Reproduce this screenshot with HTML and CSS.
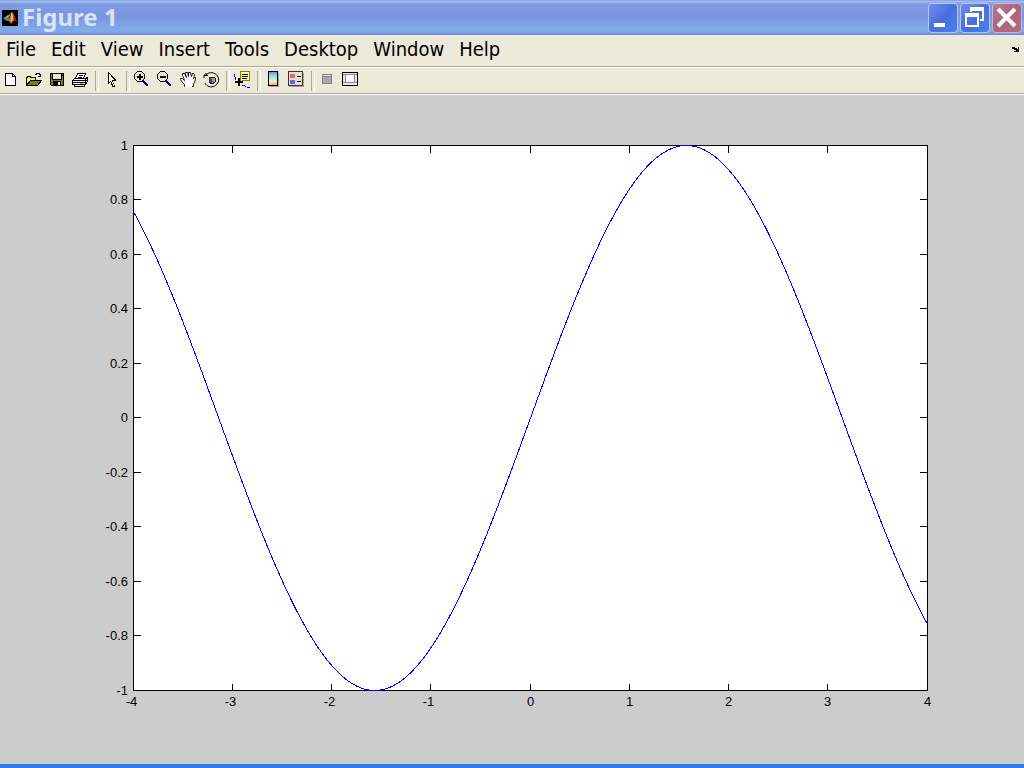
FILE: index.html
```html
<!DOCTYPE html>
<html lang="en">
<head>
<meta charset="utf-8">
<title>Figure 1</title>
<link rel="stylesheet" href="styles.css">
</head>
<body>
<div class="window">
  <header class="titlebar">
    <svg class="logo" viewBox="0 0 16 16" aria-hidden="true"><path fill="#000" d="M0 0h16v16H0z"/><path fill="#3f8fa0" d="M1 8l4-2 2 2-2 3-2-1z"/><path fill="#65c8cf" d="M4 6l3-1 3-3-3 5-2 1z"/><path fill="#e8641a" d="M5 11l3-4 2-5 2 3 3 7-3-2-3 4-2-3z"/><path fill="#ffc45a" d="M9 4l1-2 1 5-1 5-1-1z"/><path fill="#8c2010" d="M11 4l4 8-3-2z"/></svg>
    <h1 class="title">Figure 1</h1>
    <div class="controls">
      <button class="control" aria-label="Minimize"><svg viewBox="0 0 28 28"><path fill="#fff" d="M5 19h11v4H5z"/></svg></button>
      <button class="control" aria-label="Restore"><svg viewBox="0 0 28 28"><path fill="#fff" fill-rule="evenodd" d="M9 3h14v14h-4v-2h2V7H11v1H9zM4 9h14v14H4zM6 13v8h10v-8z"/></svg></button>
      <button class="control close" aria-label="Close"><svg viewBox="0 0 28 28"><path d="M5 5l17 17M22 5L5 22" stroke="#fff" stroke-width="4"/></svg></button>
    </div>
  </header>
  <nav class="menubar">
    <button class="menu">File</button><button class="menu">Edit</button><button class="menu">View</button><button class="menu">Insert</button><button class="menu">Tools</button><button class="menu">Desktop</button><button class="menu">Window</button><button class="menu">Help</button>
    <button class="dock" aria-label="Dock figure"><svg viewBox="0 0 8 8"><path d="M0 1h3v1h2v1h1V1h1v5H2V5h2V4H2V3H0z"/></svg></button>
  </nav>
  <div class="toolbar" role="toolbar" aria-label="Figure tools">
    <button class="tool" aria-label="New figure"><svg viewBox="0 0 17 17"><path d="M3.500 1.500h7l3 3v9h-10z" fill="#fff" stroke="#000"/><path d="M10.500 1.500v3h3" fill="none" stroke="#000"/></svg></button>
    <button class="tool" aria-label="Open file"><svg viewBox="0 0 17 17"><path d="M1 4h4v1h6v3H6l-4 5H1z" fill="#f8f060"/><path d="M1.500 13V5.500h1v-1h3v1h5v3M10 2.500h1v-1h3v1h1v2M13 4.500h3M15.500 2v3" fill="none" stroke="#000"/><path d="M5.500 8.500h11l-4 5h-11z" fill="#808000" stroke="#000"/></svg></button>
    <button class="tool" aria-label="Save figure"><svg viewBox="0 0 17 17"><path d="M2.500 1.500h13v12h-12l-1-1z" fill="#808000" stroke="#000"/><path d="M5 2h8v5H5z" fill="#ece9d8"/><path d="M4.500 2v5.500h9V2M14 3h1" fill="none" stroke="#000"/><path d="M5 9h8v5H5z"/><path d="M10 10h2v3h-2z" fill="#ece9d8"/></svg></button>
    <button class="tool" aria-label="Print figure"><svg viewBox="0 0 17 17"><path d="M6.500 1.500h8l-2 5h-8z" fill="#fff" stroke="#000"/><path d="M8 3.500h4M7 5.500h4" stroke="#000"/><path d="M3.500 6.500h11l2-1v4l-2 3h-13v-4z" fill="#fff" stroke="#000"/><path d="M1 8.500h13M2 10.500h12M3.500 12v2h10v-2M14.500 7v5M15 8.500h2" fill="none" stroke="#000"/><path d="M9 11.500h3" stroke="#c8b400"/></svg></button>
    <span class="separator"></span>
    <button class="tool" aria-label="Edit plot"><svg viewBox="0 0 17 17"><path d="M6 0h1v1h1v1h1v1h1v1h1v1h1v1h1v1h1v2h-3v2h1v2h1v2h-3v-2h-1v-2H9v-1H8v1H7v1H6z"/><path d="M7 2v8h1V9h1v1h1v2h1v2h1v-2h-1v-2h-1V8h2V7h-1V6h-1V5h-1V4H9V3H8V2z" fill="#fff"/></svg></button>
    <span class="separator"></span>
    <button class="tool" aria-label="Zoom in"><svg viewBox="0 0 17 17"><path d="M10 9l5 5" stroke="#000080" stroke-width="2.500"/><path d="M4.500-.500h4l3 3v4l-3 3h-4l-3-3v-4z" fill="#ece9d8" stroke="#000"/><path d="M4 4h2V2h2v2h2v2H8v2H6V6H4z"/></svg></button>
    <button class="tool" aria-label="Zoom out"><svg viewBox="0 0 17 17"><path d="M10 9l5 5" stroke="#000080" stroke-width="2.500"/><path d="M4.500-.500h4l3 3v4l-3 3h-4l-3-3v-4z" fill="#ece9d8" stroke="#000"/><path d="M4 4h6v2H4z"/></svg></button>
    <button class="tool" aria-label="Pan"><svg viewBox="0 0 17 17"><g class="smooth"><path d="M5.500 14.500v-2l-2-2-2-3V6.500h2l2 2-1-3-1-2v-2h2l2 4-1-3V.5h2l1 4V.5h2l1 4 1-3h1l1 1-1 4 1-1h1v2l-2 5v2z" fill="#fff" stroke="#000" stroke-width=".9"/><path d="M6 13h7v2H6z" fill="#fff"/></g></svg></button>
    <button class="tool" aria-label="Rotate 3D"><svg viewBox="0 0 17 17"><g class="smooth"><path d="M4 3C7-.500 13 0 15.500 4s.500 8-3 10-8 .500-9.500-3" fill="none" stroke="#000"/><path d="M2 3.500h4M4.500 1L2 3.500V6" fill="none" stroke="#000"/></g><path d="M7 6l3-1 3 1v4l-3 2-3-2z" fill="#999" stroke="#222"/><path d="M7 6l3 1v4l-3-1z" fill="#444"/></svg></button>
    <span class="separator"></span>
    <button class="tool" aria-label="Data cursor"><svg viewBox="0 0 17 17"><path d="M1.500 2v3M2.500 5v3M9 13.500h3M12 14.500h1M14 15.500h3" stroke="#00f"/><path d="M7.500-.500h9v9h-7l-2 2z" fill="#ffff9c" stroke="#808000"/><path d="M9 2.500h6M9 4.500h6M9 6.500h5" stroke="#000"/><path d="M2 9h3V6h2v3h3v2H7v3H5v-3H2z"/></svg></button>
    <span class="separator"></span>
    <button class="tool" aria-label="Insert colorbar"><svg viewBox="0 0 17 17"><defs><linearGradient id="spectrum" x1="0" y1="0" x2="0" y2="1"><stop offset="0" stop-color="#777df0"/><stop offset=".35" stop-color="#8de8f4"/><stop offset=".7" stop-color="#fff2a0"/><stop offset="1" stop-color="#f49898"/></linearGradient></defs><path d="M5 1h10v14H5z" fill="#aaa79c"/><path d="M4.500-.500h9v14h-9z" fill="url(#spectrum)" stroke="#000"/></svg></button>
    <button class="tool" aria-label="Insert legend"><svg viewBox="0 0 17 17"><path d="M2 1h15v14H2z" fill="#aaa79c"/><path d="M1.500-.500h14v14h-14z" fill="#e4dfd4" stroke="#333"/><path d="M3 2h5v4H3z" fill="#e86464"/><path d="M3 8h5v4H3z" fill="#6464e8"/><path d="M10 4.500h4M10 9.500h4" stroke="#000"/></svg></button>
    <span class="separator"></span>
    <button class="tool" aria-label="Hide plot tools"><svg viewBox="0 0 17 17"><path d="M4.500 2.500h9v9h-9z" fill="#a9a9a9" stroke="#858585"/><path d="M5 3.500h8" stroke="#ddd"/><path d="M5 4.500h8" stroke="#858585"/></svg></button>
    <button class="tool" aria-label="Show plot tools"><svg viewBox="0 0 17 17"><path d="M1.500.500h15v13h-15z" fill="#ece9d8" stroke="#000"/><path d="M4.500 2.500h9v8h-9z" fill="#fff" stroke="#777"/><path d="M2 2.500h14M2 10.500h14M4.500 2v9M13.500 2v9" stroke="#888"/></svg></button>
  </div>
  <main class="figure">
    <svg class="plot" viewBox="0 0 1024 669" role="img" aria-label="Sine curve from -4 to 4">
      <rect class="axes" x="133.500" y="50.500" width="794" height="545"/>
      <path class="ticks" id="ticks"/>
      <path class="curve" id="curve"/>
      <g id="labels"></g>
    </svg>
  </main>
</div>
<script src="plot.js"></script>
</body>
</html>
```
FILE: styles.css
```css
* { box-sizing: border-box; }
body { margin: 0; }
button { margin: 0; padding: 0; border: 0; background: none; color: inherit; font: inherit; }
svg { display: block; }

.window { display: flex; flex-direction: column; height: 100vh; background: #ece9d8; border-bottom: 4px solid #2f7be4; }

.titlebar {
  display: flex; align-items: center; height: 35px; padding: 0 2px;
  background: linear-gradient(#7b96e0 0, #9db9ee 1px, #9db9ee 2px, #7d9be2 4px, #7a96df 16px, #80a4e8 26px, #82ace9 31px, #7690dc 34px, #7088d6 35px);
}
.logo { width: 16px; height: 16px; }
.title { flex: 1; margin: 0 0 2px 4px; color: #d8e4f8; font: 700 24px/33px "Noto Sans", "Open Sans", sans-serif; }
.controls { display: flex; gap: 2px; }
.control { width: 30px; height: 30px; overflow: hidden; border: 1px solid #b4c8f4; border-radius: 4px; background: linear-gradient(135deg, #6c8eea, #4a6ee2 50%, #4583ee); }
.control svg { width: 28px; height: 28px; }
.close { border-color: #c8b4dc; background: linear-gradient(135deg, #b47c98, #ac6478 50%, #b46c7c); }

.menubar { display: flex; align-items: center; gap: 15px; height: 32px; padding: 0 4px 2px 6px; border-bottom: 1px solid #aca899; font: 20px/29px "DejaVu Sans Condensed", "DejaVu Sans", sans-serif; color: #000; }
.dock { margin-left: auto; }
.dock svg { width: 8px; height: 8px; }

.toolbar { display: flex; align-items: center; height: 27px; margin-left: -1px; border-top: 1px solid #fff; border-bottom: 1px solid #aca899; }
.tool { width: 23px; height: 23px; padding: 3px; }
.tool svg { width: 17px; height: 17px; overflow: visible; shape-rendering: crispEdges; }
.smooth { shape-rendering: auto; }
.separator { width: 8px; height: 20px; padding-left: 4px; }
.separator::before { content: ""; display: block; width: 2px; height: 100%; border-left: 1px solid #aca899; border-right: 1px solid #fff; }

.figure { flex: 1; min-height: 0; border-top: 1px solid #fff; background: #ccc; }
.plot { width: 100%; height: 100%; }
.axes { fill: #fff; stroke: #000; shape-rendering: crispEdges; }
.ticks { fill: none; stroke: #000; shape-rendering: crispEdges; }
.curve { fill: none; stroke: #00f; shape-rendering: crispEdges; }
.label { font: 13px "Liberation Sans", sans-serif; fill: #000; }
.label-x { text-anchor: middle; }
.label-y { text-anchor: end; }
```
FILE: plot.js
```js
const area = { left: 133.5, top: 50.5, width: 794, height: 545 };
const right = area.left + area.width;
const bottom = area.top + area.height;
const xAt = v => area.left + (v + 4) / 8 * area.width;
const yAt = v => area.top + (1 - v) / 2 * area.height;
const snap = v => Math.floor(v - 0.5) + 0.5;
const labels = document.getElementById("labels");

function addLabel(text, x, y, kind) {
  const node = document.createElementNS("http://www.w3.org/2000/svg", "text");
  node.setAttribute("x", x);
  node.setAttribute("y", y);
  node.setAttribute("class", "label " + kind);
  node.textContent = text;
  labels.appendChild(node);
}

let ticks = "";
for (let v = -4; v <= 4; v++) {
  const x = snap(xAt(v));
  ticks += `M${x} ${area.top}v7M${x} ${bottom}v-7`;
  addLabel(v, v < 0 ? x - 2 : x, bottom + 15, "label-x");
}
for (let i = -5; i <= 5; i++) {
  const y = snap(yAt(i / 5));
  ticks += `M${area.left} ${y}h7M${right} ${y}h-8`;
  addLabel(i / 5, 128, y + 4, "label-y");
}
document.getElementById("ticks").setAttribute("d", ticks);

const points = [];
for (let v = -4; v <= 4.001; v += 0.02) {
  points.push(xAt(v).toFixed(2) + " " + yAt(Math.sin(v)).toFixed(2));
}
document.getElementById("curve").setAttribute("d", "M" + points.join("L"));
```
